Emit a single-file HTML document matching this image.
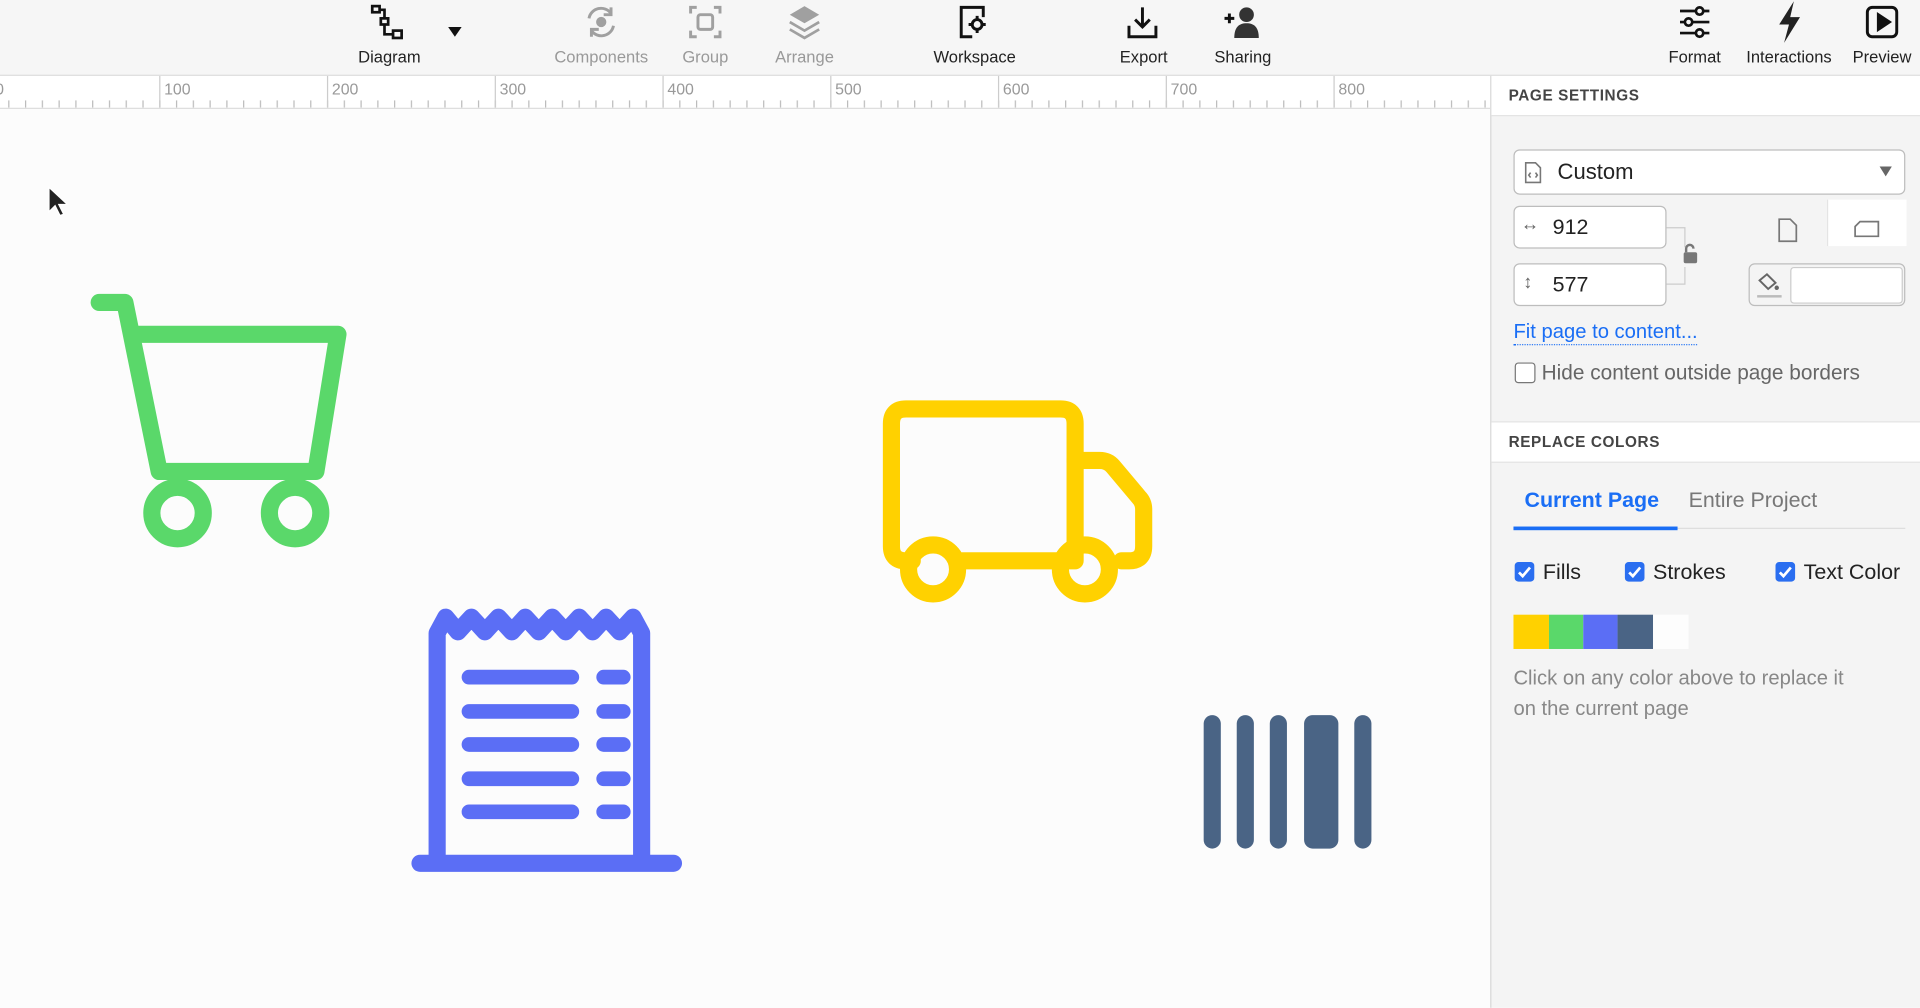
<!DOCTYPE html>
<html><head><meta charset="utf-8"><style>
html,body{margin:0;padding:0;width:1920px;height:1008px;overflow:hidden;background:#fcfcfc;font-family:"Liberation Sans",sans-serif}
#w{position:absolute;left:0;top:0;width:1568px;height:823px;transform:scale(1.22449);transform-origin:0 0;background:#fcfcfc}
.tb{position:absolute;left:0;top:0;width:1568px;height:61px;background:#f6f6f6;border-bottom:1px solid #dcdcdc}
.tl{position:absolute;top:39px;font-size:13.5px;color:#222;text-align:center;transform:translateX(-50%);white-space:nowrap}
.g{color:#999}
.ic{position:absolute;top:3px}
.ruler{position:absolute;left:0;top:62px;width:1217px;height:26px;background:#fff;border-bottom:1px solid #ddd}
.rl{position:absolute;top:3px;font-size:13px;color:#999}
.panel{position:absolute;left:1217px;top:62px;width:351px;height:761px;background:#f4f4f4;border-left:1px solid #d8d8d8}
.hd{position:absolute;left:0;width:351px;height:32px;background:#fff;border-bottom:1px solid #e2e2e2;font-size:12.5px;font-weight:bold;color:#444;letter-spacing:.5px;line-height:32px;text-indent:14px}
.box{position:absolute;background:#fff;border:1px solid #bdbdbd;border-radius:5px;box-sizing:border-box}
.t{position:absolute;white-space:nowrap}
.cb{position:absolute;width:16px;height:16px;border-radius:3px;background:#2a6ef0}
.cb svg{position:absolute;left:0;top:0}
</style></head><body><div id="w">
<div class="tb">
<svg class="ic" style="left:300px" width="36" height="32" viewBox="0 0 36 32" fill="none" stroke="#111" stroke-width="2.2"><rect x="4" y="2" width="6" height="5"/><rect x="11" y="12" width="6" height="5"/><rect x="21" y="22" width="7" height="6"/><path d="M10 5h4v7M14 17v8h7"/></svg>
<svg class="ic" style="left:365px;top:20px" width="14" height="12"><path d="M1 2h11l-5.5 8z" fill="#111"/></svg>
<div class="tl" style="left:318px">Diagram</div>
<svg class="ic" style="left:476px" width="30" height="30" viewBox="0 0 30 30" fill="none" stroke="#a0a0a0" stroke-width="2.4"><path d="M5 12a10 10 0 0 1 18-4M25 18a10 10 0 0 1-18 4"/><path d="M23 3v6h-6M7 27v-6h6"/><circle cx="15" cy="15" r="3" fill="#a0a0a0"/></svg>
<div class="tl g" style="left:491px">Components</div>
<svg class="ic" style="left:561px" width="30" height="30" viewBox="0 0 30 30" fill="none" stroke="#a0a0a0" stroke-width="2.4"><path d="M3 8V3h5M22 3h5v5M27 22v5h-5M8 27H3v-5"/><rect x="9" y="9" width="12" height="12" rx="2"/></svg>
<div class="tl g" style="left:576px">Group</div>
<svg class="ic" style="left:642px" width="30" height="30" viewBox="0 0 30 30"><path d="M15 2l12 7-12 7-12-7z" fill="#a0a0a0"/><path d="M3 15l12 7 12-7M3 21l12 7 12-7" fill="none" stroke="#a0a0a0" stroke-width="2.2"/></svg>
<div class="tl g" style="left:657px">Arrange</div>
<svg class="ic" style="left:780px" width="30" height="30" viewBox="0 0 30 30" fill="none" stroke="#111" stroke-width="2.4"><path d="M14 27H5V3h18v8"/><circle cx="18" cy="17" r="4"/><path d="M18 10v3M18 21v3M11 17h3M22 17h3" /></svg>
<div class="tl" style="left:796px">Workspace</div>
<svg class="ic" style="left:918px" width="30" height="30" viewBox="0 0 30 30" fill="none" stroke="#111" stroke-width="2.4"><path d="M15 3v16M9 13l6 6 6-6M4 18v9h22v-9"/></svg>
<div class="tl" style="left:934px">Export</div>
<svg class="ic" style="left:998px" width="34" height="30" viewBox="0 0 34 30"><path d="M2 12h8M6 8v8" stroke="#111" stroke-width="2.4"/><circle cx="20" cy="9" r="6" fill="#333"/><path d="M10 28c0-9 4-12 10-12s10 3 10 12z" fill="#333"/></svg>
<div class="tl" style="left:1015px">Sharing</div>
<svg class="ic" style="left:1369px" width="30" height="30" viewBox="0 0 30 30" fill="none" stroke="#111" stroke-width="2.2"><path d="M3 6h24M3 15h24M3 24h24"/><circle cx="19" cy="6" r="3" fill="#f6f6f6"/><circle cx="10" cy="15" r="3" fill="#f6f6f6"/><circle cx="19" cy="24" r="3" fill="#f6f6f6"/></svg>
<div class="tl" style="left:1384px">Format</div>
<svg class="ic" style="left:1448px;top:0" width="26" height="36" viewBox="0 0 26 36"><path d="M17 1L5 20h8l-4 15 13-21h-8z" fill="#222"/></svg>
<div class="tl" style="left:1461px">Interactions</div>
<svg class="ic" style="left:1522px" width="30" height="30" viewBox="0 0 30 30" fill="none" stroke="#111" stroke-width="2.4"><rect x="3" y="3" width="24" height="24" rx="4"/><path d="M12 9v12l9-6z" fill="#111"/></svg>
<div class="tl" style="left:1537px">Preview</div>
</div>
<div class="ruler">
<svg width="1217" height="26" style="position:absolute;left:0;top:0"><defs><pattern id="p" x="-7" y="0" width="13.7" height="26" patternUnits="userSpaceOnUse"><line x1="0.5" y1="20" x2="0.5" y2="26" stroke="#bbb"/></pattern></defs><rect width="1217" height="26" fill="url(#p)"/>
<g stroke="#ccc"><line x1="130.5" y1="0" x2="130.5" y2="26"/><line x1="267.5" y1="0" x2="267.5" y2="26"/><line x1="404.5" y1="0" x2="404.5" y2="26"/><line x1="541.5" y1="0" x2="541.5" y2="26"/><line x1="678.5" y1="0" x2="678.5" y2="26"/><line x1="815.5" y1="0" x2="815.5" y2="26"/><line x1="952.5" y1="0" x2="952.5" y2="26"/><line x1="1089.5" y1="0" x2="1089.5" y2="26"/></g></svg>
<div class="rl" style="left:-4px">0</div><div class="rl" style="left:134px">100</div><div class="rl" style="left:271px">200</div><div class="rl" style="left:408px">300</div><div class="rl" style="left:545px">400</div><div class="rl" style="left:682px">500</div><div class="rl" style="left:819px">600</div><div class="rl" style="left:956px">700</div><div class="rl" style="left:1093px">800</div>
</div>
<svg style="position:absolute;left:0;top:0" width="1217" height="823">
<path d="M40 153v20l5-5 4 8 3-1-4-8h7z" fill="#222" stroke="#fff" stroke-width="1"/>
<g fill="none" stroke="#5ad86a" stroke-width="14" stroke-linejoin="round" stroke-linecap="round"><path d="M81 247h21l28 138h128l18-112H108"/><circle cx="145" cy="419" r="21"/><circle cx="241" cy="419" r="21"/></g>
<g fill="none" stroke="#ffd100" stroke-width="14" stroke-linejoin="round" stroke-linecap="round"><path d="M745 458h-5q-12 0-12-12V346q0-12 12-12h126q12 0 12 12v112H786"/><path d="M878 376h20q7 0 11 5l21 25q4 4 4 10v30q0 12-12 12h-6"/><circle cx="762" cy="465" r="20"/><circle cx="886" cy="465" r="20"/></g>
<g fill="none" stroke="#5b6ef5" stroke-linejoin="round" stroke-linecap="round"><path stroke-width="14" d="M357 703V517l7-13 10 12 11-12 11 12 11-12 11 12 11-12 11 12 11-12 11 12 11-12 11 12 11-12 11 12 11-12 7 13v186M343 705h207"/><path stroke-width="12" d="M383 553h84M383 581h84M383 608h84M383 636h84M383 663h84M493 553h16M493 581h16M493 608h16M493 636h16M493 663h16"/></g>
<g fill="#4a6485"><rect x="983" y="584" width="14" height="109" rx="7"/><rect x="1010" y="584" width="14" height="109" rx="7"/><rect x="1037" y="584" width="14" height="109" rx="7"/><rect x="1065" y="584" width="28" height="109" rx="7"/><rect x="1106" y="584" width="14" height="109" rx="7"/></g>
</svg>
<div class="panel">
<div class="hd" style="top:0">PAGE SETTINGS</div>
<div class="box" style="left:18px;top:60px;width:320px;height:37px"></div>
<svg style="position:absolute;left:26px;top:70px" width="16" height="18" fill="none" stroke="#777" stroke-width="1.3"><path d="M2 1h8l4 4v12H2z"/><path d="M6 9l-1.5 2L6 13M10 9l1.5 2L10 13"/></svg>
<div class="t" style="left:54px;top:68px;font-size:18px;color:#222">Custom</div>
<svg style="position:absolute;left:316px;top:73px" width="12" height="10"><path d="M1 1h10l-5 8z" fill="#666"/></svg>
<div class="box" style="left:18px;top:106px;width:125px;height:35px"></div>
<div class="t" style="left:24px;top:113px;font-size:15px;color:#666">↔</div>
<div class="t" style="left:50px;top:113px;font-size:17.5px;color:#222">912</div>
<div class="box" style="left:18px;top:153px;width:125px;height:35px"></div>
<div class="t" style="left:26px;top:160px;font-size:15px;color:#666">↕</div>
<div class="t" style="left:50px;top:160px;font-size:17.5px;color:#222">577</div>
<svg style="position:absolute;left:143px;top:118px" width="30" height="58" fill="none" stroke="#ccc"><path d="M0 6h15v16M0 52h15V38"/><rect x="14" y="26" width="11" height="9" rx="1.5" fill="#777" stroke="none"/><path d="M16 26v-3a3 3 0 0 1 6 0" stroke="#777" stroke-width="2"/></svg>
<svg style="position:absolute;left:234px;top:116px" width="16" height="20" fill="none" stroke="#777" stroke-width="1.4"><path d="M1 1h9l5 5v13H1z"/></svg>
<div style="position:absolute;left:274px;top:101px;width:64px;height:38px;background:#fff;border-left:1px solid #e4e4e4"></div>
<svg style="position:absolute;left:296px;top:118px" width="22" height="14" fill="none" stroke="#777" stroke-width="1.4"><path d="M1 5l4-4h15v12H1z"/></svg>
<div class="box" style="left:210px;top:153px;width:128px;height:35px;background:#f4f4f4"></div>
<div style="position:absolute;left:244px;top:156px;width:90px;height:28px;background:#fff;border:1px solid #ccc;border-radius:3px"></div>
<svg style="position:absolute;left:216px;top:160px" width="22" height="22"><path d="M3 7l6-5 7 7-6 5z" fill="none" stroke="#666" stroke-width="1.6"/><circle cx="17" cy="13" r="1.8" fill="#666"/><rect x="1" y="19" width="20" height="2" fill="#bbb"/></svg>
<div class="t" style="left:18px;top:200px;font-size:16.5px;color:#1a6ef5;border-bottom:1px dotted #1a6ef5;line-height:19px">Fit page to content...</div>
<div style="position:absolute;left:19px;top:234px;width:15px;height:15px;border:1.5px solid #777;border-radius:3px;background:#fff"></div>
<div class="t" style="left:41px;top:233px;font-size:17px;color:#666">Hide content outside page borders</div>
<div class="hd" style="top:282px;border-top:1px solid #e2e2e2">REPLACE COLORS</div>
<div class="t" style="left:27px;top:336px;font-size:17.5px;font-weight:bold;color:#1a6ef5">Current Page</div>
<div class="t" style="left:161px;top:336px;font-size:17.5px;color:#777">Entire Project</div>
<div style="position:absolute;left:18px;top:369px;width:320px;height:1px;background:#ddd"></div>
<div style="position:absolute;left:18px;top:368px;width:134px;height:3px;background:#1a6ef5"></div>
<div class="cb" style="left:19px;top:397px"><svg width="16" height="16"><path d="M3.5 8.5l3 3 6-7" fill="none" stroke="#fff" stroke-width="2.2"/></svg></div>
<div class="t" style="left:42px;top:395px;font-size:17.5px;color:#222">Fills</div>
<div class="cb" style="left:109px;top:397px"><svg width="16" height="16"><path d="M3.5 8.5l3 3 6-7" fill="none" stroke="#fff" stroke-width="2.2"/></svg></div>
<div class="t" style="left:132px;top:395px;font-size:17.5px;color:#222">Strokes</div>
<div class="cb" style="left:232px;top:397px"><svg width="16" height="16"><path d="M3.5 8.5l3 3 6-7" fill="none" stroke="#fff" stroke-width="2.2"/></svg></div>
<div class="t" style="left:255px;top:395px;font-size:17.5px;color:#222">Text Color</div>
<div style="position:absolute;left:18px;top:440px;height:28px;display:flex"><div style="width:29px;background:#ffd100"></div><div style="width:28px;background:#5ad86a"></div><div style="width:28px;background:#5b6ef5"></div><div style="width:29px;background:#4a6485"></div><div style="width:29px;background:#fdfdfd"></div></div>
<div class="t" style="left:18px;top:480px;font-size:16.5px;color:#888;line-height:25px">Click on any color above to replace it<br>on the current page</div>
</div>
</div></body></html>
